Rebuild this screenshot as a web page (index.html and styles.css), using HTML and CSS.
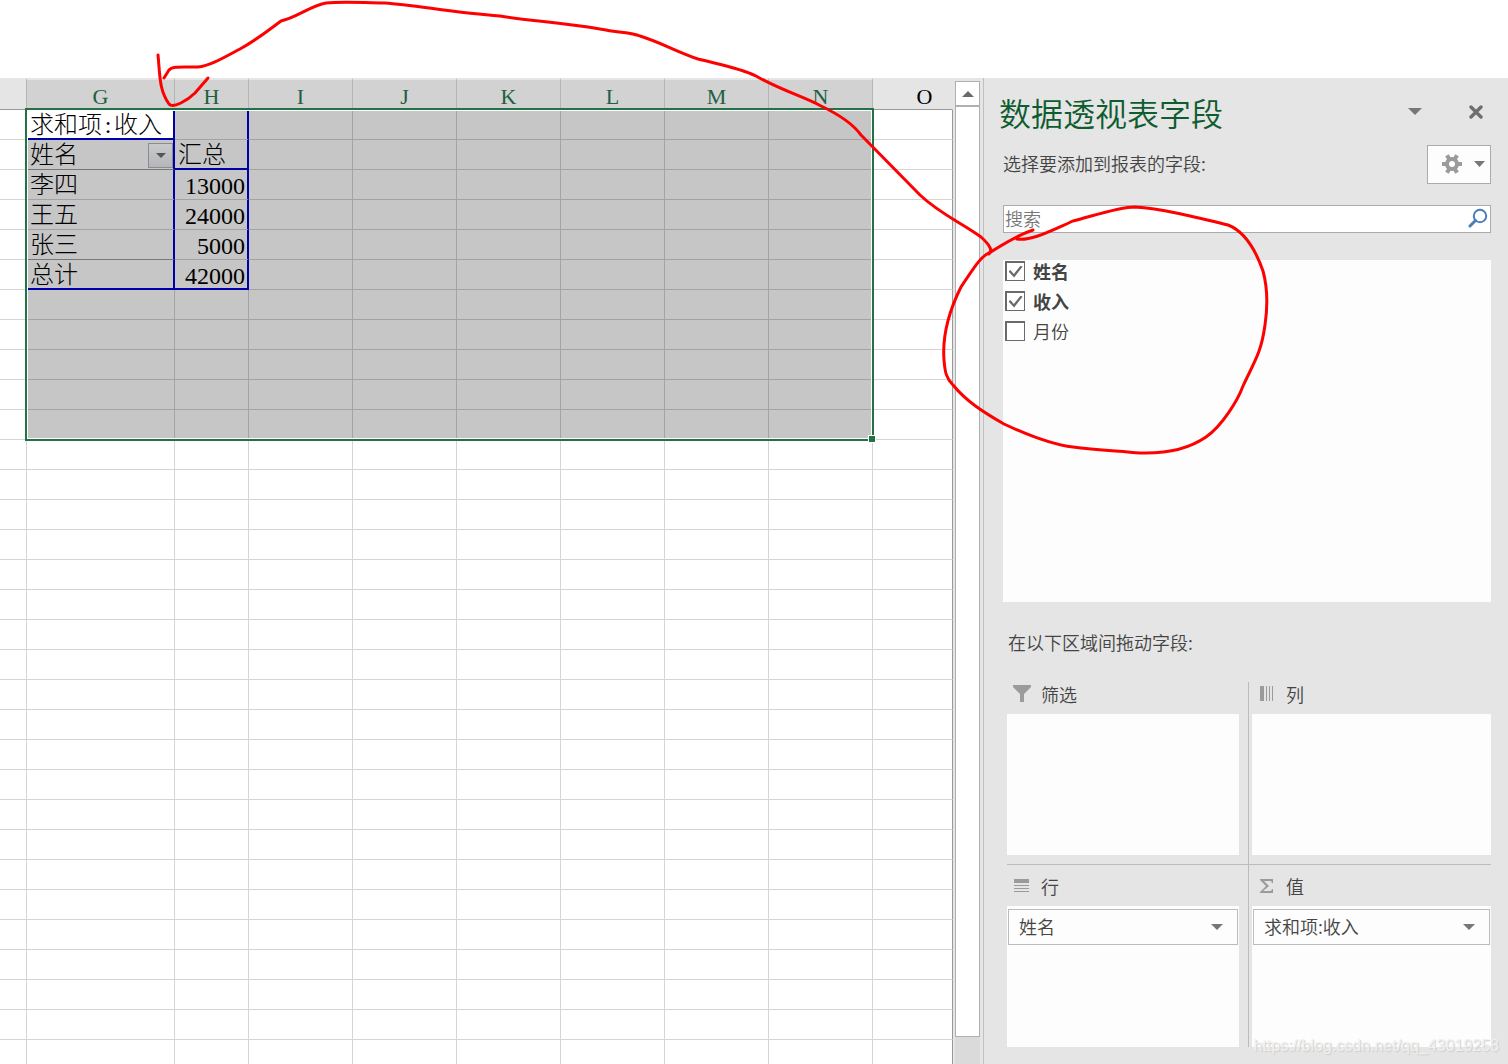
FILE: index.html
```html
<!DOCTYPE html>
<html lang="zh-CN">
<head>
<meta charset="utf-8">
<title>数据透视表字段</title>
<link rel="stylesheet" href="styles.css">
</head>
<body>
<div class="app">
  <main class="sheet">
    <table class="grid">
      <colgroup>
        <col class="c-edge"><col class="c-g"><col class="c-h"><col class="c-std"><col class="c-std"><col class="c-std"><col class="c-std"><col class="c-std"><col class="c-std"><col>
      </colgroup>
      <thead>
        <tr><th></th><th class="on">G</th><th class="on">H</th><th class="on">I</th><th class="on">J</th><th class="on">K</th><th class="on">L</th><th class="on">M</th><th class="on">N</th><th class="last">O</th></tr>
      </thead>
      <tbody id="rows">
        <tr><td></td><td class="active blue-r blue-b">求和项<span class="colon">:</span>收入</td><td class="sel blue-r"></td><td class="sel"></td><td class="sel"></td><td class="sel"></td><td class="sel"></td><td class="sel"></td><td class="sel"></td><td class="last"></td></tr>
        <tr><td></td><td class="sel blue-r dark-b"><div class="field">姓名<button class="filter" type="button" aria-label="筛选姓名"><svg width="10" height="5" viewBox="0 0 10 5"><path d="M0 0h10L5 5z" fill="#555"/></svg></button></div></td><td class="sel blue-r blue-b">汇总</td><td class="sel"></td><td class="sel"></td><td class="sel"></td><td class="sel"></td><td class="sel"></td><td class="sel"></td><td class="last"></td></tr>
        <tr><td></td><td class="sel blue-r">李四</td><td class="sel blue-r num">13000</td><td class="sel"></td><td class="sel"></td><td class="sel"></td><td class="sel"></td><td class="sel"></td><td class="sel"></td><td class="last"></td></tr>
        <tr><td></td><td class="sel blue-r">王五</td><td class="sel blue-r num">24000</td><td class="sel"></td><td class="sel"></td><td class="sel"></td><td class="sel"></td><td class="sel"></td><td class="sel"></td><td class="last"></td></tr>
        <tr><td></td><td class="sel blue-r dark-b">张三</td><td class="sel blue-r num">5000</td><td class="sel"></td><td class="sel"></td><td class="sel"></td><td class="sel"></td><td class="sel"></td><td class="sel"></td><td class="last"></td></tr>
        <tr><td></td><td class="sel blue-r blue-b">总计</td><td class="sel blue-r blue-b num">42000</td><td class="sel"></td><td class="sel"></td><td class="sel"></td><td class="sel"></td><td class="sel"></td><td class="sel"></td><td class="last"></td></tr>
      </tbody>
    </table>
    <div class="selection"><span class="handle"></span></div>
  </main>

  <div class="scroll">
    <button class="scroll-up" type="button" aria-label="向上滚动"><svg width="12" height="6" viewBox="0 0 12 6"><path d="M0 6h12L6 0z" fill="#6a6a6a"/></svg></button>
    <div class="thumb"></div>
  </div>

  <aside class="pane">
    <header class="pane-head">
      <h1>数据透视表字段</h1>
      <div class="pane-tools">
        <button class="plain" type="button" aria-label="任务窗格选项"><svg width="14" height="7" viewBox="0 0 14 7"><path d="M0 0h14L7 7z" fill="#777"/></svg></button>
        <button class="plain" type="button" aria-label="关闭"><svg width="14" height="14" viewBox="0 0 14 14"><path d="M2 2l10 10M12 2L2 12" stroke="#6e6e6e" stroke-width="3.4" stroke-linecap="round"/></svg></button>
      </div>
    </header>
    <div class="choose">
      <p>选择要添加到报表的字段:</p>
      <button class="gear" type="button" aria-label="工具">
        <svg width="20" height="20" viewBox="0 0 20 20"><g fill="#9b9b9b"><path d="M0 8h20v4H0z"/><path d="M0 8h20v4H0z" transform="rotate(60 10 10)"/><path d="M0 8h20v4H0z" transform="rotate(120 10 10)"/><circle cx="10" cy="10" r="7"/></g><circle cx="10" cy="10" r="3" fill="#fdfdfd"/></svg>
        <svg width="11" height="6" viewBox="0 0 11 6"><path d="M0 0h11L5.5 6z" fill="#777"/></svg>
      </button>
    </div>
    <div class="search">
      <input type="text" placeholder="搜索" aria-label="搜索">
      <svg width="20" height="20" viewBox="0 0 20 20" fill="none" stroke="#4a7eb8"><circle cx="12" cy="8" r="6.2" stroke-width="2"/><path d="M7.500 12.500L2 18" stroke-width="3" stroke-linecap="round"/></svg>
    </div>
    <div class="fields">
      <label class="picked"><input type="checkbox" checked>姓名</label>
      <label class="picked"><input type="checkbox" checked>收入</label>
      <label><input type="checkbox">月份</label>
    </div>
    <p class="drag-hint">在以下区域间拖动字段:</p>
    <div class="areas">
      <section class="area left top">
        <h2><svg width="18" height="18" viewBox="0 0 18 18"><path d="M0 0h18v2l-7 7v8H7V9L0 2z" fill="#9b9b9b"/></svg>筛选</h2>
        <div class="drop"></div>
      </section>
      <section class="area right top">
        <h2><svg width="18" height="18" viewBox="0 0 18 18"><path d="M2 1h4v15H2zM8 1h1v15H8zM11 1h1v15h-1zM14 1h1v15h-1z" fill="#9b9b9b"/></svg>列</h2>
        <div class="drop"></div>
      </section>
      <section class="area left">
        <h2><svg width="18" height="18" viewBox="0 0 18 18"><path d="M1 2h15v4H1zM1 8h15v1H1zM1 11h15v1H1zM1 14h15v1H1z" fill="#9b9b9b"/></svg>行</h2>
        <div class="drop">
          <div class="pill"><select aria-label="行字段"><option>姓名</option></select><svg width="12" height="6" viewBox="0 0 12 6"><path d="M0 0h12L6 6z" fill="#777"/></svg></div>
        </div>
      </section>
      <section class="area right">
        <h2><svg width="18" height="18" viewBox="0 0 18 18"><path d="M2 2h13v4h-1l-1-2H6l5 5-6 5h8l1-2h1v4H2v-1l6-6-6-6z" fill="#9b9b9b"/></svg>值</h2>
        <div class="drop">
          <div class="pill"><select aria-label="值字段"><option>求和项:收入</option></select><svg width="12" height="6" viewBox="0 0 12 6"><path d="M0 0h12L6 6z" fill="#777"/></svg></div>
        </div>
      </section>
    </div>
    <p class="watermark">https://blog.csdn.net/qq_43019258</p>
  </aside>
</div>

<svg class="ink" width="1280" height="470" viewBox="0 0 1280 470" aria-hidden="true">
  <path d="M164 78L169 70C172 66 180 67 198 67C210 66 225 57 240 49C258 39 270 29 281 21C296 18 312 5 326 3C345 1 365 3 385 3C415 5 455 13 500 16C530 21 560 22 600 29C620 33 631 32 640 36C660 42 677 52 698 59C722 65 740 68 756 76C780 90 805 97 821 106C840 115 853 124 861 135L920 195C940 214 962 223 981 237C992 247 992 251 989 254"/>
  <path d="M158 55C160 75 159 90 169 104C173 109 188 100 195 93L208 78"/>
  <path d="M1033 230C1012 237 995 250 987 254C980 258 973 269 961 287C950 309 942 334 944 360C945 372 946 378 953 385C966 401 983 412 1004 424C1034 438 1055 445 1073 447C1097 450 1120 451 1140 453C1170 454 1190 448 1206 437C1222 426 1238 400 1243 386C1254 362 1261 354 1265 325C1269 298 1266 282 1263 271C1256 251 1246 232 1228 225C1195 217 1164 209 1135 207C1118 207 1090 217 1073 221C1048 232 1031 241 1017 239"/>
</svg>
<script src="script.js"></script>
</body>
</html>
```
FILE: styles.css
```css
* { box-sizing: border-box; }

body {
  margin: 0;
  background: #fff;
  font-family: "Noto Sans CJK SC", sans-serif;
  font-size: 18px;
  font-weight: 350;
  color: #444;
}

h1, h2, p { margin: 0; font-weight: 350; }
button, input, select { font: inherit; color: inherit; }
button { padding: 0; border: 0; background: none; }
svg { display: block; flex: none; }

.app {
  display: flex;
  height: 100vh;
  padding-top: 78px;
  overflow: hidden;
}

/* Worksheet */
.sheet {
  position: relative;
  flex: 1;
  min-width: 0;
  overflow: hidden;
}

.grid {
  width: 100%;
  table-layout: fixed;
  border-spacing: 0;
  font-family: "Liberation Serif", "Noto Sans CJK SC", serif;
  font-size: 24px;
  font-weight: 300;
  color: #000;
}

.c-edge { width: 27px; }
.c-g { width: 148px; }
.c-h { width: 74px; }
.c-std { width: 104px; }

.grid th {
  height: 32px;
  padding: 4px 0 0;
  background: #e5e5e5;
  border-top: 2px solid #e5e5e5;
  border-right: 1px solid #b5b5b5;
  border-bottom: 1px solid #999;
  font-size: 22px;
  font-weight: 400;
  line-height: 24px;
}

.grid th.on { background: #d2d2d2; color: #1e6042; }
.grid th.last { border-right-color: #e5e5e5; padding-left: 24px; }

.grid td {
  height: 30px;
  padding: 3px 0 0 3px;
  border-right: 1px solid #d4d4d4;
  border-bottom: 1px solid #d4d4d4;
  line-height: 25px;
  vertical-align: top;
  white-space: nowrap;
}

.grid td.sel {
  background: #c6c6c6;
  border-right-color: #a3a3a3;
  border-bottom-color: #a3a3a3;
}

.grid td.last { border-right-color: #999; }
.grid td.dark-b { border-bottom-color: #777; }
.grid td.blue-r { border-right: 2px solid #0000a8; }
.grid td.blue-b { border-bottom: 2px solid #0000a8; }
.grid td.num { padding: 4px 2px 0 0; line-height: 24px; text-align: right; }

.colon { display: inline-block; width: 12px; text-align: center; }

.field { display: flex; align-items: center; justify-content: space-between; height: 25px; }

.filter {
  display: grid;
  place-items: center;
  width: 25px;
  height: 25px;
  border: 1px solid #8a8c90;
  background: linear-gradient(#c9cacc, #b4b6ba);
}

.selection {
  position: absolute;
  top: 30px;
  left: 25px;
  width: 849px;
  height: 333px;
  border: 2px solid #217346;
  box-shadow: inset 0 0 0 1px #fff;
  pointer-events: none;
}

.handle {
  position: absolute;
  right: -4px;
  bottom: -4px;
  width: 8px;
  height: 8px;
  border: 1px solid #fff;
  background: #217346;
}

/* Vertical scroll bar */
.scroll {
  display: flex;
  flex-direction: column;
  width: 30px;
  padding: 3px 3px 0 2px;
  background: linear-gradient(#dadada, #dadada) 2px 3px / 25px 100% no-repeat #e5e5e5;
}

.scroll-up {
  display: grid;
  place-items: center;
  height: 25px;
  border: 1px solid #b0b0b0;
  background: #fff;
}

.thumb {
  flex: 1;
  margin-bottom: 27px;
  border: 1px solid #b0b0b0;
  background: #fff;
}

/* Field list pane */
.pane {
  position: relative;
  display: flex;
  flex-direction: column;
  width: 525px;
  padding: 0 17px 17px 19px;
  border-left: 1px solid #c0c0c0;
  background: #e5e5e5;
}

.pane-head {
  display: flex;
  justify-content: space-between;
  height: 67px;
  margin-left: -4px;
}

.pane-head h1 {
  padding-top: 10px;
  font-size: 32px;
  line-height: 48px;
  color: #0e5c2f;
}

.pane-tools { display: flex; gap: 47px; padding-right: 8px; }

.choose { display: flex; justify-content: space-between; height: 39px; line-height: 37px; }

.gear {
  display: flex;
  align-items: center;
  gap: 12px;
  width: 64px;
  padding: 0 0 2px 14px;
  border: 1px solid #ababab;
  background: #fdfdfd;
}

.search {
  display: flex;
  align-items: center;
  height: 28px;
  margin: 21px 0 27px;
  padding: 0 2px 2px 0;
  border: 1px solid #ababab;
  background: #fff;
}

.search input {
  flex: 1;
  min-width: 0;
  height: 24px;
  padding: 0 1px;
  border: 0;
  outline: 0;
  background: none;
}

.search input::placeholder { color: #777; opacity: 1; }

.fields { flex: 1; background: #fdfdfd; }

.fields label {
  display: flex;
  gap: 8px;
  height: 30px;
  padding: 1px 2px;
  line-height: 21px;
}

.fields .picked { font-weight: 700; }

.fields input {
  display: grid;
  place-items: center;
  appearance: none;
  width: 20px;
  height: 20px;
  margin: 0;
  border: 2px solid #6a6a6a;
  border-width: 2px 1px 1px 2px;
  background: #fff;
}

.fields input:checked::before {
  content: "";
  width: 14px;
  height: 12px;
  background: #6a6a6a;
  clip-path: polygon(0 50%, 13% 38%, 38% 70%, 87% 0, 100% 10%, 40% 100%);
}

.drag-hint { height: 80px; padding-left: 5px; line-height: 80px; }

.areas { display: grid; grid-template-columns: 1fr 1fr; margin-left: 4px; }

.area h2 {
  display: flex;
  align-items: center;
  gap: 10px;
  padding: 0 6px 8px;
  font-size: 18px;
  line-height: 24px;
}

.area { padding-top: 9px; }
.area.top { padding: 0 0 9px; border-bottom: 1px solid #bcbcbc; }
.area.left { padding-right: 9px; border-right: 1px solid #bcbcbc; }
.area.right { padding-left: 3px; }

.drop { height: 141px; padding: 3px 1px; background: #fdfdfd; }

.pill { display: grid; align-items: center; }

.pill select {
  grid-area: 1 / 1;
  appearance: none;
  height: 36px;
  padding: 0 10px 2px;
  border: 1px solid #bcbcbc;
  border-radius: 0;
  background: #fdfdfd;
}

.pill svg { grid-area: 1 / 1; justify-self: end; margin-right: 15px; pointer-events: none; }

.watermark {
  position: absolute;
  right: 9px;
  bottom: 8px;
  font: 16px/20px "Liberation Sans", sans-serif;
  color: #f0f0f0;
  text-shadow: 1px 1px 1px #ccc;
}

/* Red pen marks drawn over the window */
.ink {
  position: absolute;
  top: 0;
  left: 0;
  fill: none;
  stroke: #f00;
  stroke-width: 3;
  stroke-linecap: round;
  stroke-linejoin: round;
  pointer-events: none;
}
```
FILE: script.js
```js
// Fill the worksheet with empty rows; the first five belong to the selection.
const body = document.getElementById("rows");
for (let r = 0; r < 26; r++) {
  const row = body.insertRow();
  for (let c = 0; c < 10; c++) {
    const cell = row.insertCell();
    if (c === 9) cell.className = "last";
    else if (c > 0 && r < 5) cell.className = "sel";
  }
}
```
